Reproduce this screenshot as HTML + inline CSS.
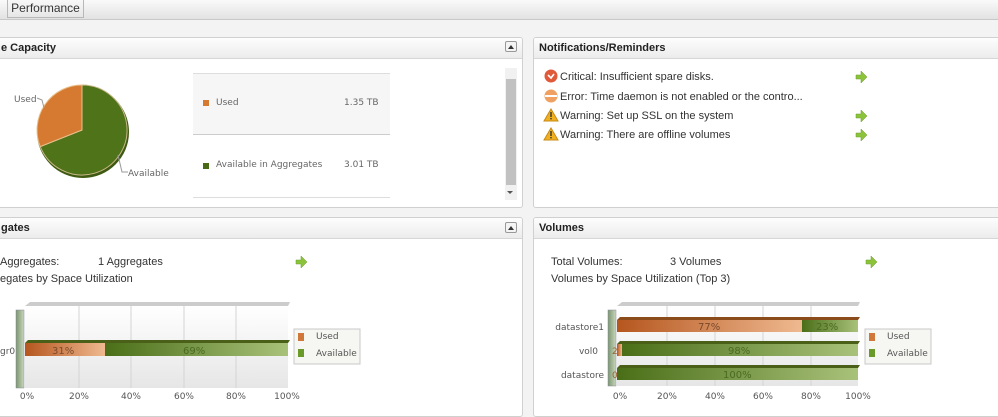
<!DOCTYPE html>
<html><head><meta charset="utf-8"><style>
*{margin:0;padding:0;box-sizing:border-box}
body{width:998px;height:411px;overflow:hidden;background:#f3f3f3;font-family:"Liberation Sans",Arial,sans-serif;position:relative;color:#333}
.abs{position:absolute}
.top{left:0;top:0;width:998px;height:20px;background:linear-gradient(#fafafa,#e2e2e2);border-bottom:1px solid #c8c8c8}
.tab{left:7px;top:-1px;width:77px;height:19px;border:1px solid #b8b8b8;background:linear-gradient(#f8f8f8,#e6e6e6);font-size:12px;text-align:center;line-height:17px;color:#333}
.panel{background:#fff;border:1px solid #d0d0d0;border-radius:3px;overflow:hidden}
.hdr{position:absolute;left:0;right:0;top:0;height:21px;background:linear-gradient(#fdfdfd,#ececec);border-bottom:1px solid #d6d6d6;font-weight:bold;font-size:11px;line-height:20px;padding-left:5px;color:#222}
.t11{font-size:11px;color:#333}
.btn{width:12px;height:11px;border:1px solid #999;border-radius:2px;background:#f4f4f4}
.g{font-family:"DejaVu Sans",sans-serif;font-size:9px;color:#666}
</style></head><body>
<div class="abs top"></div>
<div class="abs tab">Performance</div>

<!-- Panel 1 -->
<div class="abs panel" style="left:-5px;top:37px;width:528px;height:171px">
<div class="hdr">e Capacity</div>
</div>
<div class="abs btn" style="left:505px;top:41px"><div style="margin:3px auto 0;width:0;height:0;border-left:3px solid transparent;border-right:3px solid transparent;border-bottom:4px solid #333"></div></div>
<svg class="abs" style="left:0;top:60px" width="200" height="140">
<circle cx="83" cy="72" r="46" fill="#3f5a12"/>
<path d="M82 70 L82 25 A45 45 0 1 1 40.2 86.6 Z" fill="#4f7319" stroke="#c9b98a" stroke-width="1"/>
<path d="M82 70 L40.2 86.6 A45 45 0 0 1 82 25 Z" fill="#d67a32" stroke="#e8c08a" stroke-width="1"/>
<path d="M37 38 L42 40 L44 48" stroke="#999" fill="none"/>
<path d="M118 95 L122 112 L128 112" stroke="#999" fill="none"/>
<text x="14" y="42" font-family="DejaVu Sans" font-size="9" fill="#666">Used</text>
<text x="128" y="116" font-family="DejaVu Sans" font-size="9" fill="#666">Available</text>
</svg>
<div class="abs" style="left:193px;top:73px;width:197px;height:62px;background:#f6f6f6;border-top:1px solid #ddd;border-bottom:1px solid #ccc"></div>
<div class="abs" style="left:193px;top:197px;width:197px;border-top:1px solid #ddd"></div>
<div class="abs" style="left:203px;top:100px;width:6px;height:6px;background:#d67a32"></div>
<div class="abs g" style="left:216px;top:98px">Used</div>
<div class="abs g" style="left:344px;top:98px">1.35 TB</div>
<div class="abs" style="left:203px;top:163px;width:6px;height:6px;background:#4a6b16"></div>
<div class="abs g" style="left:216px;top:160px">Available in Aggregates</div>
<div class="abs g" style="left:344px;top:160px">3.01 TB</div>
<div class="abs" style="left:505px;top:68px;width:12px;height:132px;background:#f1f1f1"></div>
<div class="abs" style="left:506px;top:79px;width:10px;height:106px;background:#c1c1c1"></div>
<div class="abs" style="left:507px;top:191px;width:0;height:0;border-left:3px solid transparent;border-right:3px solid transparent;border-top:3px solid #555"></div>

<!-- Panel 2 -->
<div class="abs panel" style="left:533px;top:37px;width:470px;height:171px"><div class="hdr">Notifications/Reminders</div></div>
<svg class="abs" style="left:543px;top:68px" width="18" height="76">
<circle cx="8" cy="8" r="6.5" fill="#e05a3a"/><path d="M5 7 L8 10 L11 6" stroke="#fff" stroke-width="1.6" fill="none"/>
<circle cx="8" cy="28" r="6.5" fill="#f0a060"/><path d="M2 28 H14" stroke="#fff" stroke-width="2"/>
<path d="M8 41 L15 53 L1 53 Z" fill="#f0b020" stroke="#c88a10"/><rect x="7.3" y="44" width="1.4" height="5" fill="#333"/><rect x="7.3" y="50" width="1.4" height="1.4" fill="#333"/>
<path d="M8 60 L15 72 L1 72 Z" fill="#f0b020" stroke="#c88a10"/><rect x="7.3" y="63" width="1.4" height="5" fill="#333"/><rect x="7.3" y="69" width="1.4" height="1.4" fill="#333"/>
</svg>
<div class="abs t11" style="left:560px;top:71px">Critical: Insufficient spare disks.</div>
<div class="abs t11" style="left:560px;top:91px">Error: Time daemon is not enabled or the contro...</div>
<div class="abs t11" style="left:560px;top:110px">Warning: Set up SSL on the system</div>
<div class="abs t11" style="left:560px;top:129px">Warning: There are offline volumes</div>

<!-- Panel 3 -->
<div class="abs panel" style="left:-5px;top:217px;width:528px;height:200px"><div class="hdr">gates</div></div>
<div class="abs btn" style="left:505px;top:222px"><div style="margin:3px auto 0;width:0;height:0;border-left:3px solid transparent;border-right:3px solid transparent;border-bottom:4px solid #333"></div></div>
<div class="abs t11" style="left:0;top:256px">Aggregates:</div>
<div class="abs t11" style="left:98px;top:256px">1 Aggregates</div>
<div class="abs t11" style="left:0;top:273px">egates by Space Utilization</div>

<!-- Panel 4 -->
<div class="abs panel" style="left:533px;top:217px;width:470px;height:200px"><div class="hdr">Volumes</div></div>
<div class="abs t11" style="left:551px;top:256px">Total Volumes:</div>
<div class="abs t11" style="left:670px;top:256px">3 Volumes</div>
<div class="abs t11" style="left:551px;top:273px">Volumes by Space Utilization (Top 3)</div>

<svg class="abs" style="left:0;top:0" width="998" height="411">
<defs>
<linearGradient id="bg" x1="0" y1="0" x2="0" y2="1"><stop offset="0" stop-color="#fff"/><stop offset="1" stop-color="#e6e6e6"/></linearGradient>
<linearGradient id="or" x1="0" y1="0" x2="1" y2="0"><stop offset="0" stop-color="#b5561e"/><stop offset="1" stop-color="#efb990"/></linearGradient>
<linearGradient id="gr" x1="0" y1="0" x2="1" y2="0"><stop offset="0" stop-color="#4a6e18"/><stop offset="1" stop-color="#a9c27a"/></linearGradient>
<linearGradient id="ax" x1="0" y1="0" x2="1" y2="0"><stop offset="0" stop-color="#7a9670"/><stop offset="1" stop-color="#c8d6bc"/></linearGradient>
<g id="arr"><path d="M0 -2 H5 V-6 L11 0 L5 6 V2 H0 Z" fill="#8bc43a" stroke="#6a9a28" stroke-width=".5"/></g>
</defs>
<use href="#arr" x="856" y="77"/><use href="#arr" x="856" y="116"/><use href="#arr" x="856" y="135"/>
<use href="#arr" x="296" y="262"/><use href="#arr" x="866" y="262"/>

<rect x="25" y="306" width="263" height="82" fill="url(#bg)"/>
<path d="M25 306 L30 302 H290 L288 306" fill="#ccc"/>
<g stroke="#d4d4d4"><line x1="79" y1="306" x2="79" y2="388"/><line x1="131" y1="306" x2="131" y2="388"/><line x1="184" y1="306" x2="184" y2="388"/><line x1="236" y1="306" x2="236" y2="388"/></g>
<rect x="16" y="310" width="8" height="78" fill="url(#ax)" stroke="#889" stroke-width=".5"/>
<rect x="25" y="343" width="80" height="13" fill="url(#or)"/>
<rect x="105" y="343" width="183" height="13" fill="url(#gr)"/>
<path d="M25 343 L28 340 H290 L288 343Z" fill="#4a6018"/>
<text x="52" y="354" font-family="DejaVu Sans" font-size="10" fill="#7a4a2a">31%</text>
<text x="183" y="354" font-family="DejaVu Sans" font-size="10" fill="#4a6a20">69%</text>
<text x="0" y="354" font-family="DejaVu Sans" font-size="9" fill="#555">gr0</text>
<g font-family="DejaVu Sans" font-size="9" fill="#555" text-anchor="middle"><text x="27" y="399">0%</text><text x="79" y="399">20%</text><text x="131" y="399">40%</text><text x="184" y="399">60%</text><text x="236" y="399">80%</text><text x="287" y="399">100%</text></g>
<rect x="294" y="329" width="66" height="35" fill="#f6f6f3" stroke="#c8c8c8"/>
<rect x="298" y="333" width="6" height="8" fill="#d0783a"/><rect x="298" y="349" width="6" height="8" fill="#6a9a2a"/>
<text x="316" y="339" font-family="DejaVu Sans" font-size="9" fill="#555">Used</text><text x="316" y="356" font-family="DejaVu Sans" font-size="9" fill="#555">Available</text>

<rect x="617" y="306" width="241" height="80" fill="url(#bg)"/>
<path d="M617 306 L622 302 H860 L858 306" fill="#ccc"/>
<g stroke="#d4d4d4"><line x1="667" y1="306" x2="667" y2="386"/><line x1="715" y1="306" x2="715" y2="386"/><line x1="763" y1="306" x2="763" y2="386"/><line x1="811" y1="306" x2="811" y2="386"/></g>
<rect x="608" y="310" width="8" height="76" fill="url(#ax)" stroke="#889" stroke-width=".5"/>
<rect x="617" y="320" width="185" height="12" fill="url(#or)"/><rect x="802" y="320" width="56" height="12" fill="url(#gr)"/>
<path d="M617 320 L620 317 H860 L858 320Z" fill="#8a4a1a"/>
<rect x="617" y="344" width="5" height="12" fill="url(#or)"/><rect x="622" y="344" width="236" height="12" fill="url(#gr)"/>
<path d="M617 344 L620 341 H860 L858 344Z" fill="#4a6018"/>
<rect x="617" y="368" width="241" height="12" fill="url(#gr)"/>
<path d="M617 368 L620 365 H860 L858 368Z" fill="#4a6018"/>
<g font-family="DejaVu Sans" font-size="10"><text x="698" y="330" fill="#7a4a2a">77%</text><text x="816" y="330" fill="#4a6a20">23%</text><text x="728" y="354" fill="#4a6a20">98%</text><text x="723" y="378" fill="#4a6a20">100%</text></g>
<g font-family="DejaVu Sans" font-size="9" fill="#555" text-anchor="end"><text x="604" y="330">datastore1</text><text x="598" y="354">vol0</text><text x="604" y="378">datastore</text></g>
<text x="612" y="354" font-family="DejaVu Sans" font-size="9" fill="#a06030">2</text>
<text x="612" y="378" font-family="DejaVu Sans" font-size="9" fill="#a06030">0</text>
<g font-family="DejaVu Sans" font-size="9" fill="#555" text-anchor="middle"><text x="620" y="399">0%</text><text x="667" y="399">20%</text><text x="715" y="399">40%</text><text x="763" y="399">60%</text><text x="811" y="399">80%</text><text x="858" y="399">100%</text></g>
<rect x="865" y="329" width="66" height="35" fill="#f6f6f3" stroke="#c8c8c8"/>
<rect x="869" y="333" width="6" height="8" fill="#d0783a"/><rect x="869" y="349" width="6" height="8" fill="#6a9a2a"/>
<text x="887" y="339" font-family="DejaVu Sans" font-size="9" fill="#555">Used</text><text x="887" y="356" font-family="DejaVu Sans" font-size="9" fill="#555">Available</text>
</svg>
</body></html>
